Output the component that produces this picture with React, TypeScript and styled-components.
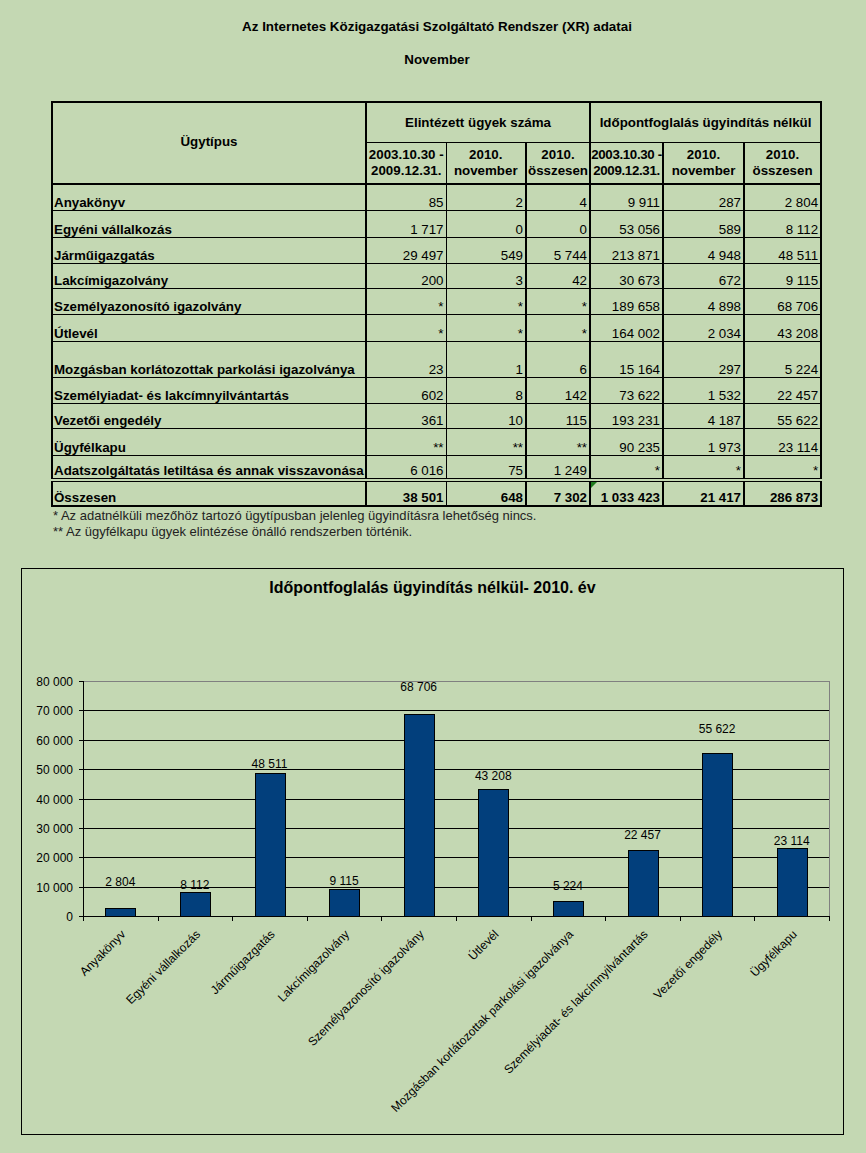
import React from 'react';
import styled, { createGlobalStyle } from 'styled-components';

const GlobalStyle = createGlobalStyle`
  html, body {
    margin: 0;
    padding: 0;
  }
  body {
    background: #c4d8b3;
    font-family: "Liberation Sans", Arial, sans-serif;
    color: #000;
  }
`;

type Row = { name: string; values: string[]; height: number };

const rows: Row[] = [
  { name: 'Anyakönyv', values: ['85', '2', '4', '9 911', '287', '2 804'], height: 26 },
  { name: 'Egyéni vállalkozás', values: ['1 717', '0', '0', '53 056', '589', '8 112'], height: 27 },
  { name: 'Járműigazgatás', values: ['29 497', '549', '5 744', '213 871', '4 948', '48 511'], height: 26 },
  { name: 'Lakcímigazolvány', values: ['200', '3', '42', '30 673', '672', '9 115'], height: 25 },
  { name: 'Személyazonosító igazolvány', values: ['*', '*', '*', '189 658', '4 898', '68 706'], height: 26 },
  { name: 'Útlevél', values: ['*', '*', '*', '164 002', '2 034', '43 208'], height: 27 },
  { name: 'Mozgásban korlátozottak parkolási igazolványa', values: ['23', '1', '6', '15 164', '297', '5 224'], height: 36 },
  { name: 'Személyiadat- és lakcímnyilvántartás', values: ['602', '8', '142', '73 622', '1 532', '22 457'], height: 26 },
  { name: 'Vezetői engedély', values: ['361', '10', '115', '193 231', '4 187', '55 622'], height: 25 },
  { name: 'Ügyfélkapu', values: ['**', '**', '**', '90 235', '1 973', '23 114'], height: 27 },
  { name: 'Adatszolgáltatás letiltása és annak visszavonása', values: ['6 016', '75', '1 249', '*', '*', '*'], height: 25 },
];

const totals = ['38 501', '648', '7 302', '1 033 423', '21 417', '286 873'];

// which value columns get a thick right border
const thickRight = [false, true, true, true, true, true];

const chartData = [
  { label: 'Anyakönyv', value: 2804, text: '2 804', labelY: 883 },
  { label: 'Egyéni vállalkozás', value: 8112, text: '8 112', labelY: 886 },
  { label: 'Járműigazgatás', value: 48511, text: '48 511', labelY: 765 },
  { label: 'Lakcímigazolvány', value: 9115, text: '9 115', labelY: 882 },
  { label: 'Személyazonosító igazolvány', value: 68706, text: '68 706', labelY: 688 },
  { label: 'Útlevél', value: 43208, text: '43 208', labelY: 777 },
  { label: 'Mozgásban korlátozottak parkolási igazolványa', value: 5224, text: '5 224', labelY: 887 },
  { label: 'Személyiadat- és lakcímnyilvántartás', value: 22457, text: '22 457', labelY: 836 },
  { label: 'Vezetői engedély', value: 55622, text: '55 622', labelY: 730 },
  { label: 'Ügyfélkapu', value: 23114, text: '23 114', labelY: 842 },
];

// chart svg origin on page: (22, 610)
const OX = 22;
const OY = 610;
const PLOT_L = 83 - OX;
const PLOT_R = 829 - OX;
const PLOT_T = 682 - OY;
const PLOT_B = 917 - OY;
const MAX = 80000;
const CAT_W = (PLOT_R - PLOT_L) / chartData.length;
const BAR_W = 30;

const yFor = (v: number) => PLOT_B - (v / MAX) * (PLOT_B - PLOT_T);

export default function App() {
  const ticks = [0, 10000, 20000, 30000, 40000, 50000, 60000, 70000, 80000];

  return (
    <Page>
      <GlobalStyle />
      <Title>Az Internetes Közigazgatási Szolgáltató Rendszer (XR) adatai</Title>
      <SubTitle>November</SubTitle>

      <Table>
        <colgroup>
          <col style={{ width: 314 }} />
          <col style={{ width: 80 }} />
          <col style={{ width: 80 }} />
          <col style={{ width: 64 }} />
          <col style={{ width: 73 }} />
          <col style={{ width: 81 }} />
          <col style={{ width: 77 }} />
        </colgroup>
        <thead>
          <tr>
            <HeadCell rowSpan={2} $thick>
              Ügytípus
            </HeadCell>
            <GroupCell colSpan={3}>Elintézett ügyek száma</GroupCell>
            <GroupCell colSpan={3}>Időpontfoglalás ügyindítás nélkül</GroupCell>
          </tr>
          <tr>
            <SubHead $thick={false}>
              2003.10.30 -<br />
              2009.12.31.
            </SubHead>
            <SubHead $thick>
              2010.
              <br />
              november
            </SubHead>
            <SubHead $thick>
              2010.
              <br />
              összesen
            </SubHead>
            <SubHead $thick $tight>
              2003.10.30 -<br />
              2009.12.31.
            </SubHead>
            <SubHead $thick>
              2010.
              <br />
              november
            </SubHead>
            <SubHead $thick>
              2010.
              <br />
              összesen
            </SubHead>
          </tr>
        </thead>
        <tbody>
          {rows.map((row) => (
            <tr key={row.name} style={{ height: row.height }}>
              <NameCell>{row.name}</NameCell>
              {row.values.map((v, i) => (
                <NumCell key={i} $thick={thickRight[i]}>
                  {v}
                </NumCell>
              ))}
            </tr>
          ))}
          <TotalRow>
            <NameCell $total>Összesen</NameCell>
            {totals.map((v, i) => (
              <NumCell key={i} $thick={thickRight[i]} $total>
                {i === 3 && <ErrorMark />}
                {v}
              </NumCell>
            ))}
          </TotalRow>
        </tbody>
      </Table>

      <Notes>
        <div>* Az adatnélküli mezőhöz tartozó ügytípusban jelenleg ügyindításra lehetőség nincs.</div>
        <div>** Az ügyfélkapu ügyek elintézése önálló rendszerben történik.</div>
      </Notes>

      <ChartBox>
        <ChartTitle>Időpontfoglalás ügyindítás nélkül- 2010. év</ChartTitle>
        <svg width={821} height={524} viewBox="0 0 821 524">
          {/* plot border */}
          <line x1={PLOT_L} y1={PLOT_T + 0.5} x2={PLOT_R} y2={PLOT_T + 0.5} stroke="#808080" />
          <line x1={PLOT_R + 0.5} y1={PLOT_T} x2={PLOT_R + 0.5} y2={PLOT_B} stroke="#808080" />

          {ticks.map((t) => {
            const y = Math.round(yFor(t)) + 0.5;
            return (
              <g key={t}>
                {t > 0 && t < MAX && <line x1={PLOT_L} y1={y} x2={PLOT_R} y2={y} stroke="#000" />}
                <line x1={PLOT_L - 4} y1={y} x2={PLOT_L} y2={y} stroke="#000" />
                <AxisText x={51} y={y + 4} textAnchor="end">
                  {t === 0 ? '0' : `${t / 1000} 000`}
                </AxisText>
              </g>
            );
          })}

          {chartData.map((d, i) => {
            const cx = PLOT_L + CAT_W * (i + 0.5);
            const top = yFor(d.value);
            return (
              <g key={d.label}>
                <rect
                  x={Math.round(cx - BAR_W / 2) + 0.5}
                  y={Math.round(top) + 0.5}
                  width={BAR_W}
                  height={PLOT_B - Math.round(top)}
                  fill="#023f7c"
                  stroke="#000"
                />
                <AxisText x={cx} y={d.labelY - OY + 4} textAnchor="middle">
                  {d.text}
                </AxisText>
                <AxisText
                  x={cx + 6}
                  y={936 - OY}
                  textAnchor="end"
                  transform={`rotate(-45 ${cx + 6} ${936 - OY})`}
                >
                  {d.label}
                </AxisText>
              </g>
            );
          })}

          {/* axes */}
          <line x1={PLOT_L + 0.5} y1={PLOT_T} x2={PLOT_L + 0.5} y2={PLOT_B + 1} stroke="#000" />
          <line x1={PLOT_L} y1={PLOT_B + 0.5} x2={PLOT_R + 1} y2={PLOT_B + 0.5} stroke="#000" />
          {Array.from({ length: chartData.length + 1 }).map((_, i) => {
            const x = Math.round(PLOT_L + CAT_W * i) + 0.5;
            return <line key={i} x1={x} y1={PLOT_B} x2={x} y2={PLOT_B + 5} stroke="#000" />;
          })}
        </svg>
      </ChartBox>
    </Page>
  );
}

const Page = styled.div`
  width: 866px;
  height: 1153px;
  overflow: hidden;
  box-sizing: border-box;
  padding-top: 19px;
`;

const Title = styled.div`
  text-align: center;
  font-size: 13.4px;
  font-weight: bold;
  line-height: 16px;
  padding-left: 8px;
`;

const SubTitle = styled(Title)`
  margin-top: 17px;
`;

const Table = styled.table`
  margin: 33px 0 0 51px;
  width: 769px;
  table-layout: fixed;
  border-collapse: collapse;
  border: 2px solid #000;
  font-size: 13.33px;
`;

const HeadCell = styled.th<{ $thick: boolean }>`
  font-weight: bold;
  text-align: center;
  vertical-align: middle;
  border-right: ${({ $thick }) => ($thick ? '2px' : '1px')} solid #000;
  border-bottom: 2px solid #000;
  padding: 0 0 4px;
`;

const GroupCell = styled.th`
  height: 39px;
  font-weight: bold;
  text-align: center;
  vertical-align: middle;
  border-right: 2px solid #000;
  border-bottom: 1px solid #000;
  padding: 0;
`;

const SubHead = styled.th<{ $thick: boolean; $tight?: boolean }>`
  height: 40px;
  font-weight: bold;
  text-align: center;
  vertical-align: middle;
  line-height: 16px;
  white-space: nowrap;
  overflow: hidden;
  padding: 0;
  letter-spacing: ${({ $tight }) => ($tight ? '-0.35px' : 'normal')};
  border-right: ${({ $thick }) => ($thick ? '2px' : '1px')} solid #000;
  border-bottom: 2px solid #000;
`;

const NameCell = styled.td<{ $total?: boolean }>`
  font-weight: bold;
  text-align: left;
  vertical-align: bottom;
  padding: 0 0 0 1px;
  white-space: nowrap;
  border-right: 2px solid #000;
  border-bottom: 1px solid #000;
`;

const NumCell = styled.td<{ $thick: boolean; $total?: boolean }>`
  position: relative;
  text-align: right;
  vertical-align: bottom;
  padding: 0 2px 0 0;
  white-space: nowrap;
  font-weight: ${({ $total }) => ($total ? 'bold' : 'normal')};
  border-right: ${({ $thick }) => ($thick ? '2px' : '1px')} solid #000;
  border-bottom: 1px solid #000;
`;

const TotalRow = styled.tr`
  height: 26px;

  & > td {
    border-top: 4px double #000;
  }
`;

const ErrorMark = styled.span`
  position: absolute;
  left: 0;
  top: 0;
  width: 0;
  height: 0;
  border-top: 6px solid #1f7a1f;
  border-right: 6px solid transparent;
`;

const Notes = styled.div`
  margin: 1px 0 0 53px;
  font-size: 13px;
  line-height: 16px;
  color: #222;
`;

const ChartBox = styled.div`
  margin: 28px 0 0 21px;
  width: 821px;
  height: 565px;
  border: 1px solid #000;
`;

const ChartTitle = styled.div`
  height: 40px;
  box-sizing: border-box;
  padding: 9px 0 0 0;
  text-align: center;
  font-size: 16px;
  font-weight: bold;
  line-height: 20px;
`;

const AxisText = styled.text`
  font-family: "Liberation Sans", Arial, sans-serif;
  font-size: 12px;
  fill: #000;
`;
